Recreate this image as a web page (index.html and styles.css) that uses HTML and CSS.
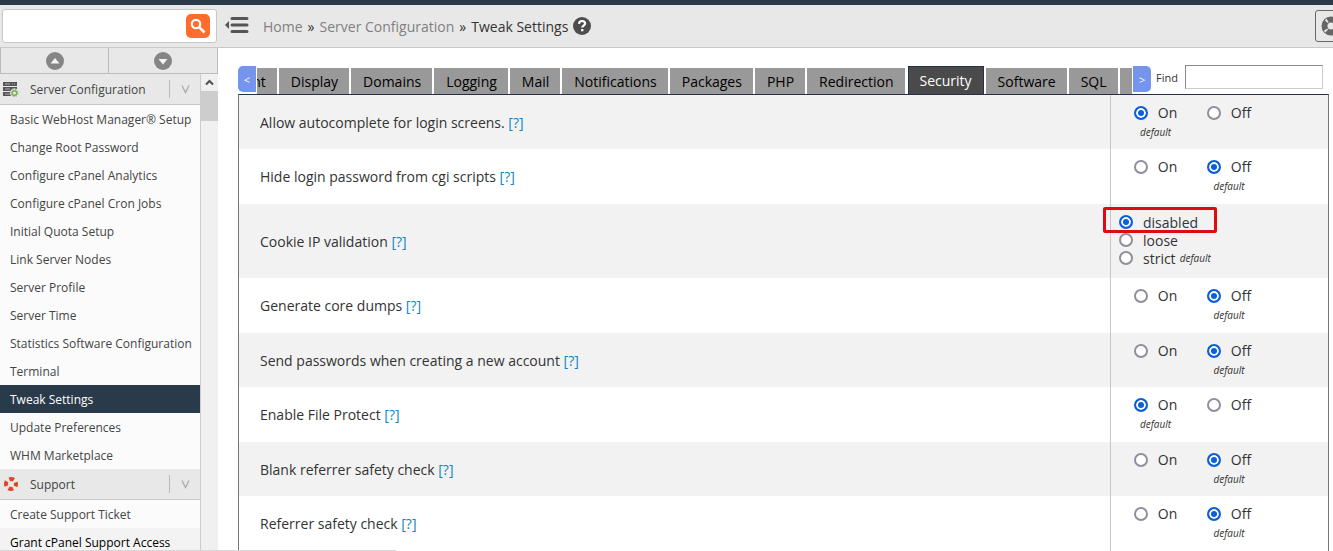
FILE: index.html
```html
<!DOCTYPE html>
<html lang="en">
<head>
    <meta charset="UTF-8">
    <meta name="viewport" content="width=device-width, initial-scale=1.0">
    <title>Tweak Settings</title>
    <link rel="stylesheet" href="styles.css">
</head>
<body>
    <header class="topbar">
        <form class="search">
            <input class="search-input" type="text" aria-label="Search">
            <button class="search-button" type="button" aria-label="Search">
                <svg width="24" height="24" viewBox="0 0 24 24" fill="none" stroke="#fff">
                    <circle cx="10" cy="10" r="4.2" stroke-width="2.2"/>
                    <path d="M13.2 13.2L18.5 18.5" stroke-width="2.6"/>
                </svg>
            </button>
        </form>
        <button class="collapse-button" type="button" aria-label="Toggle menu">
            <svg width="24" height="18" viewBox="0 0 24 18">
                <path d="M0 8l4-4v8z" fill="#555"/>
                <path d="M7 1.500h15M7 8h15M7 14.500h15" stroke="#555" stroke-width="3" stroke-linecap="round"/>
            </svg>
        </button>
        <nav class="breadcrumb">
            <a href="#">Home</a><span>»</span><a href="#">Server Configuration</a><span>»</span><b>Tweak Settings</b>
            <a class="help" href="#" aria-label="Help">
                <svg width="18" height="18" viewBox="0 0 18 18">
                    <circle cx="9" cy="9" r="9" fill="#4d4d4d"/>
                    <path d="M6 6.900C6.100 4.900 7.300 4 9 4s3.100 1 3.100 2.600c0 2-2.800 2.100-2.800 4" fill="none" stroke="#fff" stroke-width="2.200"/>
                    <rect x="8.100" y="12" width="2.300" height="2.300" fill="#fff"/>
                </svg>
            </a>
        </nav>
        <button class="support-button" type="button" aria-label="Support">
            <svg width="20" height="20" viewBox="0 0 20 20" fill="none">
                <circle cx="10" cy="10" r="6.500" stroke="#666" stroke-width="6"/>
                <circle cx="10" cy="10" r="6.500" stroke="#e8e8e8" stroke-width="4" stroke-dasharray="1.600 8.610" stroke-dashoffset="-4.300"/>
            </svg>
        </button>
    </header>

    <div class="page">
        <aside class="sidebar">
            <div class="sidebar-steps">
                <button type="button" aria-label="Previous">
                    <svg width="18" height="18" viewBox="0 0 18 18"><circle cx="9" cy="9" r="9" fill="#858585"/><path d="M4.500 11.500L9 6l4.500 5.500z" fill="#f4f4f4"/></svg>
                </button>
                <button type="button" aria-label="Next">
                    <svg width="18" height="18" viewBox="0 0 18 18"><circle cx="9" cy="9" r="9" fill="#858585"/><path d="M4.500 7L9 12.500 13.500 7z" fill="#f4f4f4"/></svg>
                </button>
            </div>
            <div class="sidebar-body">
                <nav class="menu">
                    <div class="menu-heading">
                        <svg width="16" height="16" viewBox="0 0 16 16">
                            <path d="M0 1h14v4H0zM0 6h14v4H0zM0 11h14v4H0z" fill="#555"/>
                            <path d="M2 3h5M2 8h5M2 13h5M9 3h1M11 3h1M9 8h1M11 8h1" stroke="#aaa"/>
                            <circle cx="11.500" cy="12" r="4.500" fill="#e8e8e8"/>
                            <circle cx="11.500" cy="12" r="2.300" fill="none" stroke="#7cb356" stroke-width="1.600"/>
                            <circle cx="11.500" cy="12" r="3.600" fill="none" stroke="#7cb356" stroke-dasharray="1.400 1.420"/>
                        </svg>
                        <span>Server Configuration</span>
                        <button type="button" aria-label="Collapse Server Configuration"><svg width="9" height="9" viewBox="0 0 9 9"><path d="M1 0.500L4.500 7.500 8 0.500" fill="none" stroke="#aaa" stroke-width="1.300"/></svg></button>
                    </div>
                    <a href="#">Basic WebHost Manager® Setup</a>
                    <a href="#">Change Root Password</a>
                    <a href="#">Configure cPanel Analytics</a>
                    <a href="#">Configure cPanel Cron Jobs</a>
                    <a href="#">Initial Quota Setup</a>
                    <a href="#">Link Server Nodes</a>
                    <a href="#">Server Profile</a>
                    <a href="#">Server Time</a>
                    <a href="#">Statistics Software Configuration</a>
                    <a href="#">Terminal</a>
                    <a class="current" href="#">Tweak Settings</a>
                    <a href="#">Update Preferences</a>
                    <a href="#">WHM Marketplace</a>
                    <div class="menu-heading">
                        <svg width="16" height="16" viewBox="0 0 16 16" fill="none">
                            <circle cx="8" cy="8" r="5" stroke="#f5e6d6" stroke-width="4"/>
                            <circle cx="8" cy="8" r="5" stroke="#d9452f" stroke-width="4" stroke-dasharray="4.800 3.054" stroke-dashoffset="2.400"/>
                        </svg>
                        <span>Support</span>
                        <button type="button" aria-label="Collapse Support"><svg width="9" height="9" viewBox="0 0 9 9"><path d="M1 0.500L4.500 7.500 8 0.500" fill="none" stroke="#aaa" stroke-width="1.300"/></svg></button>
                    </div>
                    <a href="#">Create Support Ticket</a>
                    <a class="hovered" href="#">Grant cPanel Support Access</a>
                </nav>
                <div class="scrollbar">
                    <svg width="17" height="17" viewBox="0 0 17 17"><path d="M5 10.500L8.500 7l3.500 3.500" fill="none" stroke="#505050" stroke-width="2"/></svg>
                    <div class="scrollbar-thumb"></div>
                </div>
            </div>
        </aside>

        <main class="content">
            <div class="toolbar">
                <button class="scroll-left" type="button">&lt;</button>
                <div class="tabs">
                    <button type="button">Development</button>
                    <button type="button">Display</button>
                    <button type="button">Domains</button>
                    <button type="button">Logging</button>
                    <button type="button">Mail</button>
                    <button type="button">Notifications</button>
                    <button type="button">Packages</button>
                    <button type="button">PHP</button>
                    <button type="button">Redirection</button>
                    <button class="active" type="button">Security</button>
                    <button type="button">Software</button>
                    <button type="button">SQL</button>
                    <button type="button">System</button>
                </div>
                <button class="scroll-right" type="button">&gt;</button>
                <label class="find-label" for="find">Find</label>
                <input class="find-input" id="find" type="text">
            </div>

            <table class="settings">
                <tr>
                    <td>Allow autocomplete for login screens. <a href="#">[?]</a></td>
                    <td><div class="toggle">
                        <div><label><input type="radio" name="autocomplete" checked>On</label><i>default</i></div>
                        <div><label><input type="radio" name="autocomplete">Off</label></div>
                    </div></td>
                </tr>
                <tr>
                    <td>Hide login password from cgi scripts <a href="#">[?]</a></td>
                    <td><div class="toggle">
                        <div><label><input type="radio" name="cgihidepass">On</label></div>
                        <div><label><input type="radio" name="cgihidepass" checked>Off</label><i>default</i></div>
                    </div></td>
                </tr>
                <tr>
                    <td>Cookie IP validation <a href="#">[?]</a></td>
                    <td><div class="choices">
                        <label class="marked"><input type="radio" name="cookieip" checked>disabled</label>
                        <label><input type="radio" name="cookieip">loose</label>
                        <label><input type="radio" name="cookieip">strict <i>default</i></label>
                    </div></td>
                </tr>
                <tr>
                    <td>Generate core dumps <a href="#">[?]</a></td>
                    <td><div class="toggle">
                        <div><label><input type="radio" name="coredump">On</label></div>
                        <div><label><input type="radio" name="coredump" checked>Off</label><i>default</i></div>
                    </div></td>
                </tr>
                <tr>
                    <td>Send passwords when creating a new account <a href="#">[?]</a></td>
                    <td><div class="toggle">
                        <div><label><input type="radio" name="sendpass">On</label></div>
                        <div><label><input type="radio" name="sendpass" checked>Off</label><i>default</i></div>
                    </div></td>
                </tr>
                <tr>
                    <td>Enable File Protect <a href="#">[?]</a></td>
                    <td><div class="toggle">
                        <div><label><input type="radio" name="fileprotect" checked>On</label><i>default</i></div>
                        <div><label><input type="radio" name="fileprotect">Off</label></div>
                    </div></td>
                </tr>
                <tr>
                    <td>Blank referrer safety check <a href="#">[?]</a></td>
                    <td><div class="toggle">
                        <div><label><input type="radio" name="blankreferrer">On</label></div>
                        <div><label><input type="radio" name="blankreferrer" checked>Off</label><i>default</i></div>
                    </div></td>
                </tr>
                <tr>
                    <td>Referrer safety check <a href="#">[?]</a></td>
                    <td><div class="toggle">
                        <div><label><input type="radio" name="referrer">On</label></div>
                        <div><label><input type="radio" name="referrer" checked>Off</label><i>default</i></div>
                    </div></td>
                </tr>
            </table>
        </main>
    </div>
    <div class="status-edge"></div>
</body>
</html>
```
FILE: styles.css
```css
*,
*::before {
    box-sizing: border-box;
}

body {
    margin: 0;
    height: 100vh;
    overflow: hidden;
    display: flex;
    flex-direction: column;
    background-color: #fff;
    color: #333;
    font-family: "Open Sans", sans-serif;
    font-size: 14px;
}

a {
    text-decoration: none;
}

button {
    margin: 0;
    padding: 0;
    border: none;
    background: none;
    font-family: inherit;
    cursor: pointer;
}

svg {
    display: block;
}

/* header */
.topbar {
    flex: none;
    display: flex;
    align-items: center;
    height: 48px;
    border-top: 5px solid #293a4a;
    border-bottom: 1px solid #c8c8c8;
    background-color: #e8e8e8;
    overflow: hidden;
}

.search {
    display: flex;
    align-items: center;
    width: 215px;
    height: 34px;
    margin-left: 2px;
    padding-right: 6px;
    border: 1px solid #c6c6c6;
    border-radius: 3px;
    background-color: #fff;
}

.search-input {
    flex: 1;
    min-width: 0;
    height: 28px;
    border: none;
    outline: none;
    background: none;
}

.search-button {
    width: 24px;
    height: 24px;
    border-radius: 5px;
    background-color: #ff6c2c;
}

.collapse-button {
    margin-left: 8px;
}

.breadcrumb {
    display: flex;
    align-items: center;
    gap: 5px;
    margin-left: 14px;
}

.breadcrumb a {
    color: #808080;
}

.breadcrumb b {
    font-weight: normal;
}

.support-button {
    display: flex;
    align-items: center;
    flex: none;
    width: 32px;
    height: 32px;
    margin-left: auto;
    margin-right: -14px;
    padding-left: 5px;
    border: 1px solid #666;
    border-radius: 3px;
}

.page {
    flex: 1;
    min-height: 0;
    display: flex;
}

/* sidebar */
.sidebar {
    flex: none;
    display: flex;
    flex-direction: column;
    width: 218px;
}

.sidebar-steps {
    flex: none;
    display: grid;
    grid-template-columns: 1fr 1fr;
    height: 26px;
    border-bottom: 1px solid #bbb;
    background-color: #e8e8e8;
}

.sidebar-steps button {
    display: flex;
    align-items: center;
    justify-content: center;
    border-right: 1px solid #bbb;
}

.sidebar-steps button:first-child {
    border-left: 1px solid #bbb;
}

.sidebar-body {
    flex: 1;
    min-height: 0;
    display: flex;
    overflow: hidden;
}

.menu {
    flex: 1;
    background-color: #fbfbfb;
    border-right: 1px solid #ccc;
    font-size: 12px;
}

.menu a {
    display: block;
    height: 28px;
    padding: 2px 0 0 10px;
    line-height: 26px;
    color: #444;
    white-space: nowrap;
}

.menu a.current {
    background-color: #293a4a;
    color: #fff;
}

.menu a.hovered {
    background-color: #f3f3f3;
    color: #000;
}

.menu-heading {
    display: flex;
    align-items: center;
    gap: 11px;
    height: 31px;
    padding-left: 3px;
    border-bottom: 1px solid #c8c8c8;
    background-color: #e8e8e8;
    color: #444;
}

.menu-heading button {
    display: flex;
    align-items: center;
    justify-content: center;
    width: 31px;
    height: 18px;
    margin-left: auto;
    border-left: 1px solid #bbb;
}

.scrollbar {
    flex: none;
    width: 17px;
    background-color: #f0f0f0;
}

.scrollbar-thumb {
    height: 30px;
    background-color: #cdcdcd;
}

/* tabs and find box */
.content {
    flex: 1;
    min-width: 0;
    padding: 17px 4px 0 20px;
}

.toolbar {
    display: flex;
    height: 29px;
    padding-right: 6px;
}

.scroll-left,
.scroll-right {
    flex: none;
    width: 18px;
    height: 26px;
    margin-top: 1px;
    background-color: #7494ee;
    color: #fff;
    font-size: 11px;
}

.scroll-left {
    border-radius: 5px 0 0 5px;
}

.scroll-right {
    border-radius: 0 5px 5px 0;
}

.tabs {
    flex: 1;
    min-width: 0;
    display: flex;
    align-items: flex-end;
    gap: 2px;
    margin: 0 1px;
    overflow: hidden;
}

.tabs button {
    flex: none;
    height: 26px;
    padding: 0 11px 0 12px;
    background-color: #999;
    color: #000;
    font-size: 14px;
}

/* the strip is scrolled past the start of its first tab */
.tabs button:first-child {
    margin-left: -91px;
}

.tabs button.active {
    height: 28px;
    margin-left: 1px;
    padding: 0 11px;
    border: 1px solid #26304a;
    border-bottom: none;
    background-color: #4a4a4a;
    color: #fff;
}

.find-label {
    margin: 0 7px 0 5px;
    font-size: 11px;
    line-height: 26px;
}

.find-input {
    flex: none;
    width: 138px;
    height: 24px;
    border: 1px solid #ccc;
    border-top-color: #888;
    border-left-color: #888;
    outline: none;
}

/* settings */
.settings {
    width: 100%;
    border: 1px solid #777;
    border-top-color: #26304a;
    border-bottom: none;
    border-spacing: 0;
}

.settings tr {
    height: 54px;
}

.settings tr:nth-child(even) {
    height: 55px;
}

.settings tr:nth-child(odd) {
    background-color: #f2f2f2;
}

.settings td {
    padding: 0 0 0 21px;
}

.settings td:last-child {
    width: 218px;
    padding: 8px;
    border-left: 1px solid #c8c8c8;
    vertical-align: top;
}

.settings a {
    color: #0e87c0;
}

.settings i {
    font-size: 10px;
}

.toggle {
    display: grid;
    grid-template-columns: 73px 74px;
}

.toggle label,
.toggle i {
    display: flex;
    align-items: center;
    justify-content: center;
    height: 19px;
}

.choices {
    padding: 1px 0 3px;
}

.choices label {
    position: relative;
    display: flex;
    align-items: center;
    height: 18px;
}

.choices i {
    margin-left: 4px;
}

/* red frame over the chosen option */
.choices .marked::before {
    content: "";
    position: absolute;
    top: -6px;
    left: -16px;
    width: 114px;
    height: 26px;
    border: 3px solid #e00b10;
    border-radius: 2px;
}

input[type="radio"] {
    appearance: none;
    flex: none;
    width: 14px;
    height: 14px;
    margin: 0 10px 0 0;
    border: 2px solid #8f8f9d;
    border-radius: 50%;
    background-color: #fff;
}

input[type="radio"]:checked {
    border-color: #0b60d8;
    background-color: #0b60d8;
    box-shadow: inset 0 0 0 2px #fff;
}

/* top edge of the link status bubble */
.status-edge {
    position: fixed;
    left: 0;
    bottom: 0;
    width: 396px;
    height: 1px;
    background-color: #d8d8d8;
}
```
